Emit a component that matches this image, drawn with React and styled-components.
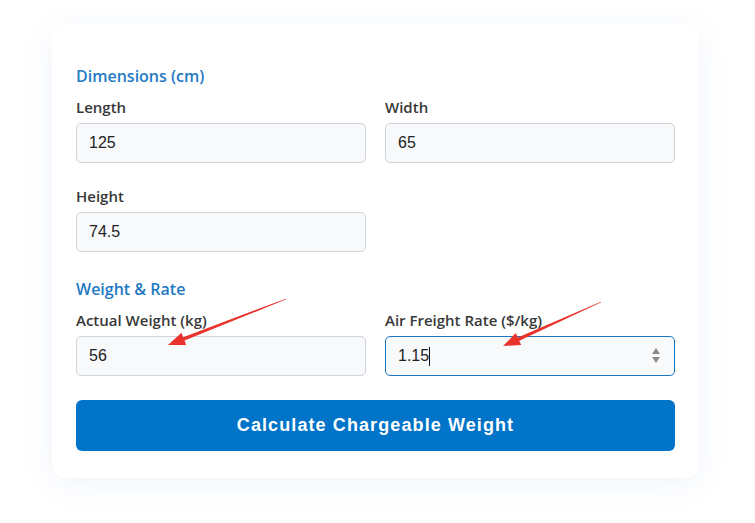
import React from "react";
import styled, { createGlobalStyle } from "styled-components";

const GlobalStyle = createGlobalStyle`
  html, body {
    margin: 0;
    padding: 0;
    background: #ffffff;
  }
  * {
    box-sizing: border-box;
  }
`;

const Page = styled.div`
  position: relative;
  width: 755px;
  height: 523px;
  padding: 24px 56px 0 52px;
`;

const Card = styled.div`
  background: #fff;
  border-radius: 14px;
  box-shadow: 0 6px 30px rgba(120, 160, 210, 0.12);
  padding: 40px 24px 27px;
`;

const SectionTitle = styled.h3`
  margin: 0 0 8px;
  font-family: "Open Sans", "Noto Sans", sans-serif;
  font-size: 16px;
  font-weight: 600;
  line-height: 24px;
  color: #1f7ac4;
`;

const Grid = styled.div`
  display: grid;
  grid-template-columns: 1fr 1fr;
  column-gap: 19px;
  row-gap: 22px;
  margin-bottom: ${(p) => p.$mb || 0}px;
`;

const Field = styled.div`
  display: flex;
  flex-direction: column;
  gap: 5px;
`;

const Label = styled.label`
  font-family: "Open Sans", "Noto Sans", sans-serif;
  font-size: 15px;
  font-weight: 600;
  line-height: 22px;
  color: #383838;
`;

const InputWrap = styled.div`
  position: relative;
  height: 40px;
  border: 1px solid ${(p) => (p.$focused ? "#1b76bf" : "#ced4da")};
  border-radius: 5px;
  background: #f8f9fa;
`;

const Input = styled.input`
  width: 100%;
  height: 100%;
  border: none;
  outline: none;
  background: transparent;
  padding: 0 12px;
  font-family: "Liberation Sans", Arial, sans-serif;
  font-size: 16px;
  color: #222;
`;

const Caret = styled.span`
  position: absolute;
  top: 10px;
  width: 1px;
  height: 19px;
  background: #111;
`;

const Spinner = styled.div`
  position: absolute;
  right: 14px;
  top: 11px;
  display: flex;
  flex-direction: column;
  gap: 3px;
`;

const Tri = styled.span`
  width: 0;
  height: 0;
  border-left: 4.5px solid transparent;
  border-right: 4.5px solid transparent;
  ${(p) =>
    p.$up
      ? "border-bottom: 6px solid #8a8a8a;"
      : "border-top: 6px solid #8a8a8a;"}
`;

const Button = styled.button`
  display: block;
  width: 100%;
  height: 51px;
  border: none;
  border-radius: 6px;
  background: #0074c8;
  color: #fff;
  font-family: "Liberation Sans", Arial, sans-serif;
  font-size: 18px;
  font-weight: 700;
  letter-spacing: 1.1px;
  cursor: pointer;
`;

const Overlay = styled.svg`
  position: absolute;
  left: 0;
  top: 0;
  pointer-events: none;
`;

function arrowPoints(tx, ty, px, py) {
  const dx = px - tx;
  const dy = py - ty;
  const len = Math.hypot(dx, dy);
  const ux = dx / len;
  const uy = dy / len;
  const nx = -uy;
  const ny = ux;
  const head = 17;
  const bx = px - ux * head;
  const by = py - uy * head;
  const pts = [
    [tx + nx * 0.4, ty + ny * 0.4],
    [bx + nx * 1.8, by + ny * 1.8],
    [bx + nx * 6.5, by + ny * 6.5],
    [px, py],
    [bx - nx * 6.5, by - ny * 6.5],
    [bx - nx * 1.8, by - ny * 1.8],
    [tx - nx * 0.4, ty - ny * 0.4],
  ];
  return pts.map((p) => p.join(",")).join(" ");
}

function Arrow({ from, to }) {
  return <polygon points={arrowPoints(from[0], from[1], to[0], to[1])} fill="#e8322b" />;
}

function NumberField({ label, value, focused }) {
  return (
    <Field>
      <Label>{label}</Label>
      <InputWrap $focused={focused}>
        <Input type="text" value={value} readOnly />
        {focused && (
          <>
            <Caret style={{ left: 12 + value.length * 7.8 }} />
            <Spinner>
              <Tri $up />
              <Tri />
            </Spinner>
          </>
        )}
      </InputWrap>
    </Field>
  );
}

export default function App() {
  return (
    <>
      <GlobalStyle />
      <Page>
        <Card>
          <SectionTitle>Dimensions (cm)</SectionTitle>
          <Grid $mb={25}>
            <NumberField label="Length" value="125" />
            <NumberField label="Width" value="65" />
            <NumberField label="Height" value="74.5" />
          </Grid>
          <SectionTitle>Weight &amp; Rate</SectionTitle>
          <Grid $mb={24}>
            <NumberField label="Actual Weight (kg)" value="56" />
            <NumberField label="Air Freight Rate ($/kg)" value="1.15" focused />
          </Grid>
          <Button>Calculate Chargeable Weight</Button>
        </Card>
        <Overlay width="755" height="523">
          <Arrow from={[286, 299]} to={[168, 345]} />
          <Arrow from={[601, 302]} to={[503, 346]} />
        </Overlay>
      </Page>
    </>
  );
}
